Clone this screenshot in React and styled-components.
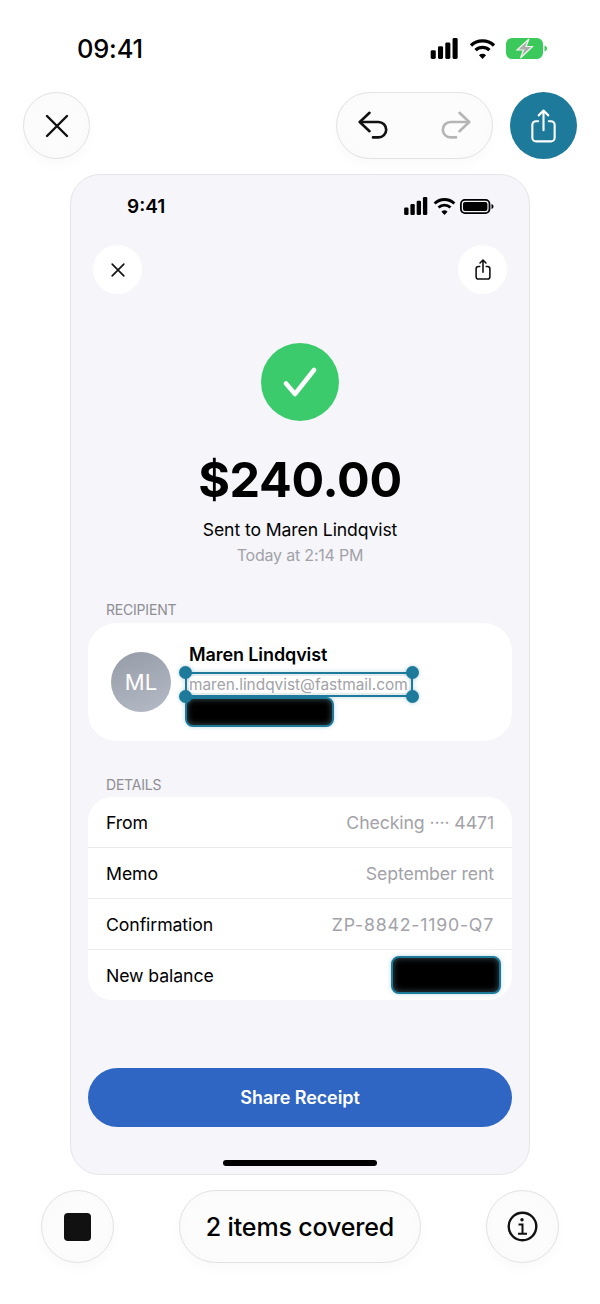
import styled, { createGlobalStyle } from 'styled-components';

const GlobalStyle = createGlobalStyle`
    html, body {
        margin: 0;
        padding: 0;
        background: #ffffff;
    }
    * {
        box-sizing: border-box;
    }
`;

const ACCENT = '#1d7a9a';

const Page = styled.div`
    width: 600px;
    height: 1304px;
    overflow: hidden;
    display: flex;
    flex-direction: column;
    background: #ffffff;
    font-family: Inter, "Liberation Sans", sans-serif;
    color: #000000;
`;

const OuterStatus = styled.div`
    height: 92px;
    padding: 0 53px 0 77px;
    display: flex;
    justify-content: space-between;
    align-items: center;
`;

const OuterTime = styled.span`
    font-size: 25.5px;
    font-weight: 500;
    letter-spacing: -0.2px;
    margin-top: 4px;
`;

const StatusIcons = styled.div`
    display: flex;
    align-items: center;
    gap: ${(p) => p.$gap}px;
    margin-top: ${(p) => p.$top || 0}px;
`;

const Toolbar = styled.div`
    height: 67px;
    padding: 0 23px;
    display: flex;
    align-items: center;
    justify-content: space-between;
`;

const ToolbarRight = styled.div`
    display: flex;
    align-items: center;
    gap: 17px;
`;

const Glass = styled.div`
    flex: none;
    width: ${(p) => p.$w}px;
    height: ${(p) => p.$h}px;
    border-radius: ${(p) => p.$h / 2}px;
    display: flex;
    align-items: center;
    justify-content: ${(p) => p.$between ? 'space-between' : 'center'};
    padding: ${(p) => p.$between ? '0 21px' : '0'};
    background: #fcfcfc;
    border: 1px solid #e2e2e2;
    box-shadow: 0 6px 12px rgba(0, 0, 0, 0.025), inset 0 0 12px rgba(0, 0, 0, 0.015);
`;

const ShareAction = styled.div`
    width: 67px;
    height: 67px;
    border-radius: 50%;
    background: ${ACCENT};
    display: flex;
    align-items: center;
    justify-content: center;
`;

const Phone = styled.div`
    width: 460px;
    height: 1001px;
    margin: 15px auto 0;
    border-radius: 30px;
    background: #f5f5fa;
    border: 1px solid #e5e5e9;
    display: flex;
    flex-direction: column;
    padding: 0 17px;
`;

const InnerStatus = styled.div`
    height: 70px;
    padding: 0 17px 8px 39px;
    display: flex;
    align-items: center;
    justify-content: space-between;
    flex: none;
    margin-right: 1px;
`;

const InnerTime = styled.span`
    font-size: 19px;
    font-weight: 600;
    margin-top: 1px;
`;

const InnerNav = styled.div`
    margin-left: 5px;
    margin-right: 5px;
    display: flex;
    justify-content: space-between;
`;

const RoundButton = styled.div`
    width: 49px;
    height: 49px;
    border-radius: 50%;
    background: #ffffff;
    display: flex;
    align-items: center;
    justify-content: center;
`;

const Hero = styled.div`
    margin-top: 49px;
    display: flex;
    flex-direction: column;
    align-items: center;
`;

const CheckCircle = styled.div`
    width: 78px;
    height: 78px;
    border-radius: 50%;
    background: #3ccb6c;
    display: flex;
    align-items: center;
    justify-content: center;
`;

const Amount = styled.div`
    margin-top: 29px;
    font-size: 48.5px;
    line-height: 60px;
    font-weight: 700;
    letter-spacing: -0.3px;
`;

const SentTo = styled.div`
    margin-top: 8px;
    font-size: 17.6px;
    line-height: 24px;
    letter-spacing: -0.1px;
`;

const When = styled.div`
    margin-top: 3px;
    font-size: 16px;
    line-height: 20px;
    letter-spacing: -0.2px;
    color: #a2a2a8;
`;

const SectionLabel = styled.div`
    margin: ${(p) => p.$top}px 0 ${(p) => p.$bottom}px 18px;
    font-size: 14px;
    line-height: 17px;
    letter-spacing: -0.2px;
    color: #8e8e93;
`;

const RecipientCard = styled.div`
    height: 118px;
    border-radius: 28px;
    background: #ffffff;
    display: flex;
    align-items: center;
    padding-left: 23px;
`;

const Avatar = styled.div`
    flex: none;
    width: 60px;
    height: 60px;
    border-radius: 50%;
    background: linear-gradient(160deg, #969ca7, #b5bbc6);
    color: #ffffff;
    font-size: 22px;
    display: flex;
    align-items: center;
    justify-content: center;
`;

const RecipientText = styled.div`
    margin-left: 14px;
    align-self: flex-start;
    margin-top: 20px;
    display: flex;
    flex-direction: column;
`;

const Name = styled.div`
    margin-left: 4px;
    font-size: 18px;
    line-height: 24px;
    font-weight: 600;
    letter-spacing: -0.1px;
`;

const Email = styled.div`
    position: relative;
    margin-top: 5px;
    width: 228px;
    height: 25px;
    padding-left: 2px;
    font-size: 15.4px;
    line-height: 21px;
    color: #a2a2a8;
    white-space: nowrap;
    border: 2px solid ${ACCENT};
    border-radius: 6px;
    box-shadow: inset 0 0 0 2px #e4ecef, 0 0 5px rgba(29, 122, 154, 0.25);
`;

const Handle = styled.span`
    position: absolute;
    width: 13px;
    height: 13px;
    border-radius: 50%;
    background: ${ACCENT};
    left: ${(p) => p.$x}px;
    top: ${(p) => p.$y}px;
    box-shadow: 0 0 4px rgba(29, 122, 154, 0.35);
`;

const Redaction = styled.div`
    flex: none;
    width: ${(p) => p.$w}px;
    height: ${(p) => p.$h}px;
    margin-right: ${(p) => p.$right || 0}px;
    border-radius: 8px;
    background: #000000;
    border: 2.5px solid ${ACCENT};
    box-shadow: inset 0 0 6px rgba(70, 90, 100, 0.9), 0 0 4px rgba(29, 122, 154, 0.3);
`;

const DetailsCard = styled.div`
    height: 203px;
    border-radius: 24px;
    background: #ffffff;
    display: flex;
    flex-direction: column;
    overflow: hidden;
`;

const Row = styled.div`
    flex: 1;
    display: flex;
    align-items: center;
    justify-content: space-between;
    padding: 0 18px;
    font-size: 17.7px;
    letter-spacing: -0.1px;
    border-bottom: ${(p) => p.$last ? 'none' : '1px solid #ebebee'};
`;

const Value = styled.span`
    color: #a2a2a8;
    letter-spacing: ${(p) => p.$wide ? '0.8px' : '-0.1px'};
`;

const ShareReceipt = styled.div`
    margin-top: 68px;
    height: 59px;
    border-radius: 30px;
    background: #2f66c4;
    color: #ffffff;
    font-size: 18px;
    font-weight: 600;
    letter-spacing: -0.1px;
    display: flex;
    align-items: center;
    justify-content: center;
`;

const HomeBar = styled.div`
    margin: 33px auto 0;
    width: 154px;
    height: 6px;
    border-radius: 3px;
    background: #000000;
`;

const BottomBar = styled.div`
    margin-top: 15px;
    padding: 0 41px;
    display: flex;
    align-items: center;
    justify-content: space-between;
`;

const StopSquare = styled.div`
    width: 27px;
    height: 28px;
    border-radius: 4px;
    background: #111111;
`;

const CoveredText = styled.span`
    font-size: 25px;
    font-weight: 500;
    letter-spacing: -0.15px;
`;

function SignalIcon({ w, h, color = '#000' }) {
    return (
        <svg width={w} height={h} viewBox="0 0 25 19" fill={color}>
            <rect x="0" y="11" width="4.6" height="8" rx="1.3" />
            <rect x="6.6" y="7.5" width="4.6" height="11.5" rx="1.3" />
            <rect x="13.2" y="4" width="4.6" height="15" rx="1.3" />
            <rect x="19.8" y="0" width="4.6" height="19" rx="1.3" />
        </svg>
    );
}

function WifiIcon({ w, h }) {
    return (
        <svg width={w} height={h} viewBox="0 0 24 19" fill="none" stroke="#000" strokeLinecap="butt">
            <path d="M1.6 6.8a15 15 0 0 1 20.8 0" strokeWidth="3" />
            <path d="M5.7 11a9.2 9.2 0 0 1 12.6 0" strokeWidth="3" />
            <path d="M12 19l-3.2-3.4a4.6 4.6 0 0 1 6.4 0z" fill="#000" stroke="none" />
        </svg>
    );
}

function ChargingBattery() {
    return (
        <svg width="41" height="21" viewBox="0 0 41 21">
            <rect x="0" y="0" width="37" height="21" rx="6" fill="#3cc95c" />
            <path d="M38.500 7.500c1.600.5 2.500 1.600 2.500 3s-.9 2.500-2.500 3z" fill="#3cc95c" />
            <path d="M23 1 11 12h6.500l-3 8 12-11.500h-6.500z" fill="#a8aea8" stroke="#eef4ee" strokeWidth="1.200" />
        </svg>
    );
}

function InnerBattery() {
    return (
        <svg width="34" height="15" viewBox="0 0 34 15">
            <rect x="0.9" y="0.9" width="28.600" height="13.200" rx="4" fill="none" stroke="#000" strokeWidth="1.800" />
            <rect x="3" y="3" width="24.400" height="9" rx="2" fill="#000" />
            <path d="M31.500 5c1.300.4 2 1.300 2 2.500s-.7 2.100-2 2.500z" fill="#000" />
        </svg>
    );
}

function CloseIcon({ size, stroke }) {
    return (
        <svg width={size} height={size} viewBox="0 0 24 24" fill="none" stroke="#111" strokeWidth={stroke} strokeLinecap="round">
            <path d="M2 2 22 22M22 2 2 22" />
        </svg>
    );
}

function ShareIcon({ w, h, color, stroke }) {
    return (
        <svg width={w} height={h} viewBox="0 0 24 32" fill="none" stroke={color} strokeWidth={stroke} strokeLinecap="round" strokeLinejoin="round">
            <path d="M7 11.500H5a3.500 3.500 0 0 0-3.500 3.500v12A3.500 3.500 0 0 0 5 30.500h14a3.500 3.500 0 0 0 3.500-3.500V15a3.500 3.500 0 0 0-3.500-3.500h-2" />
            <path d="M12 20V1.800M7.500 6 12 1.500 16.500 6" />
        </svg>
    );
}

function UndoIcon({ color, flip }) {
    return (
        <svg width="30" height="29" viewBox="0 0 30 29" fill="none" stroke={color} strokeWidth="2.600" strokeLinecap="round" strokeLinejoin="round"
            style={flip ? { transform: 'scaleX(-1)' } : undefined}>
            <path d="M11.500 1.800 1.800 11l9.700 9.200" />
            <path d="M2 11h18.500a7.700 7.700 0 0 1 0 15.400H15" />
        </svg>
    );
}

function InfoIcon() {
    return (
        <svg width="31" height="31" viewBox="0 0 31 31" fill="none" stroke="#111" strokeWidth="2.400">
            <circle cx="15.500" cy="15.500" r="13.800" />
            <circle cx="15" cy="8.800" r="1.700" fill="#111" stroke="none" />
            <path d="M11.500 13.500H15.500V22.500M11 22.800H20" strokeWidth="2" />
        </svg>
    );
}

export default function App() {
    return (
        <Page>
            <GlobalStyle />
            <OuterStatus>
                <OuterTime>09:41</OuterTime>
                <StatusIcons $gap={10} $top={4}>
                    <SignalIcon w={29} h={21} />
                    <WifiIcon w={27} h={21} />
                    <ChargingBattery />
                </StatusIcons>
            </OuterStatus>

            <Toolbar>
                <Glass $w={67} $h={67}>
                    <CloseIcon size={24} stroke={2.4} />
                </Glass>
                <ToolbarRight>
                    <Glass $w={157} $h={67} $between>
                        <UndoIcon color="#111" />
                        <UndoIcon color="#b5b5b5" flip />
                    </Glass>
                    <ShareAction>
                        <ShareIcon w={27} h={34} color="#ffffff" stroke={2} />
                    </ShareAction>
                </ToolbarRight>
            </Toolbar>

            <Phone>
                <InnerStatus>
                    <InnerTime>9:41</InnerTime>
                    <StatusIcons $gap={4}>
                        <SignalIcon w={26} h={18} />
                        <WifiIcon w={23} h={18} />
                        <InnerBattery />
                    </StatusIcons>
                </InnerStatus>

                <InnerNav>
                    <RoundButton>
                        <CloseIcon size={14} stroke={2.8} />
                    </RoundButton>
                    <RoundButton>
                        <ShareIcon w={16} h={21} color="#111" stroke={2.4} />
                    </RoundButton>
                </InnerNav>

                <Hero>
                    <CheckCircle>
                        <svg width="34" height="30" viewBox="0 0 34 30" fill="none" stroke="#fff" strokeWidth="4.500" strokeLinecap="round" strokeLinejoin="round">
                            <path d="M3 16.500 12 27 31 3" />
                        </svg>
                    </CheckCircle>
                    <Amount>$240.00</Amount>
                    <SentTo>Sent to Maren Lindqvist</SentTo>
                    <When>Today at 2:14 PM</When>
                </Hero>

                <SectionLabel $top={36} $bottom={5}>RECIPIENT</SectionLabel>
                <RecipientCard>
                    <Avatar>ML</Avatar>
                    <RecipientText>
                        <Name>Maren Lindqvist</Name>
                        <Email>
                            maren.lindqvist@fastmail.com
                            <Handle $x={-8} $y={-8} />
                            <Handle $x={219} $y={-8} />
                            <Handle $x={-8} $y={16} />
                            <Handle $x={219} $y={16} />
                        </Email>
                        <Redaction $w={149} $h={30} />
                    </RecipientText>
                </RecipientCard>

                <SectionLabel $top={35} $bottom={4}>DETAILS</SectionLabel>
                <DetailsCard>
                    <Row>
                        <span>From</span>
                        <Value>Checking ···· 4471</Value>
                    </Row>
                    <Row>
                        <span>Memo</span>
                        <Value>September rent</Value>
                    </Row>
                    <Row>
                        <span>Confirmation</span>
                        <Value $wide>ZP-8842-1190-Q7</Value>
                    </Row>
                    <Row $last>
                        <span>New balance</span>
                        <Redaction $w={110} $h={38} $right={-7} />
                    </Row>
                </DetailsCard>

                <ShareReceipt>Share Receipt</ShareReceipt>
                <HomeBar />
            </Phone>

            <BottomBar>
                <Glass $w={73} $h={73}>
                    <StopSquare />
                </Glass>
                <Glass $w={242} $h={73}>
                    <CoveredText>2 items covered</CoveredText>
                </Glass>
                <Glass $w={73} $h={73}>
                    <InfoIcon />
                </Glass>
            </BottomBar>
        </Page>
    );
}
